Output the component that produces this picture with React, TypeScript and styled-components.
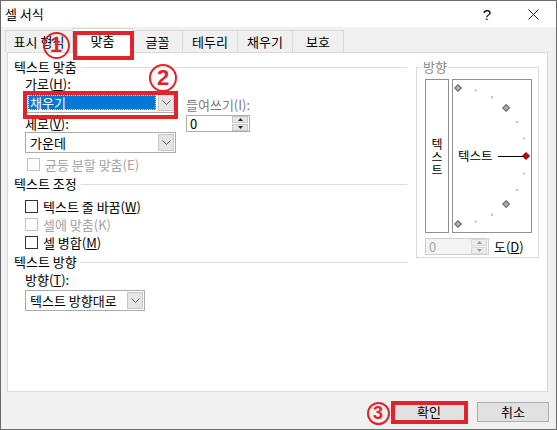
import React from "react";
import styled, { createGlobalStyle } from "styled-components";

const GlobalStyle = createGlobalStyle`
  html, body {
    margin: 0;
    padding: 0;
    background: #f0f0f0;
  }
  body {
    font-family: "Noto Sans CJK KR", "Noto Sans", sans-serif;
    font-size: 13px;
    color: #000;
  }
  * {
    box-sizing: border-box;
  }
`;

const RED = "#e3232a";

const Window = styled.div`
  position: relative;
  width: 557px;
  height: 430px;
  border: 1px solid #6b6b6b;
  background: #f0f0f0;
  display: flex;
  flex-direction: column;
  overflow: hidden;
`;

const TitleBar = styled.div`
  height: 26px;
  background: #fff;
  display: flex;
  align-items: center;
  padding-left: 4px;
`;

const Title = styled.div`
  flex: 1;
  line-height: 16px;
`;

const TitleButton = styled.div`
  width: 46px;
  height: 26px;
  display: flex;
  align-items: center;
  justify-content: center;
  font-family: "Liberation Sans", sans-serif;
  font-size: 15px;
`;

const TabBar = styled.div`
  position: relative;
  z-index: 1;
  display: flex;
  align-items: flex-end;
  height: 24px;
  margin-top: 1px;
  padding-left: 5px;
`;

const Tab = styled.div<{ $w: number; $active?: boolean }>`
  width: ${(p) => p.$w}px;
  height: ${(p) => (p.$active ? 25 : 22)}px;
  margin-bottom: ${(p) => (p.$active ? -1 : 0)}px;
  margin-left: -1px;
  background: ${(p) => (p.$active ? "#fff" : "#f0f0f0")};
  border: 1px solid #d9d9d9;
  border-bottom: none;
  display: flex;
  align-items: center;
  justify-content: center;
  line-height: 16px;
  white-space: nowrap;
`;

const Panel = styled.div`
  height: 340px;
  margin: 0 8px 0 6px;
  background: #fff;
  border: 1px solid #d9d9d9;
  padding: 6px 0 0 6px;
  display: grid;
  grid-template-columns: 393px 123px;
  column-gap: 9px;
  align-items: start;
`;

const Column = styled.div`
  display: flex;
  flex-direction: column;
`;

const GroupHeader = styled.div<{ $mt?: number }>`
  display: flex;
  align-items: center;
  gap: 4px;
  height: 16px;
  margin-top: ${(p) => p.$mt ?? 0}px;
  line-height: 16px;
  white-space: nowrap;

  &::after {
    content: "";
    flex: 1;
    height: 1px;
    background: #dcdcdc;
  }
`;

const Indent = styled.div`
  display: flex;
  flex-direction: column;
  padding-left: 11px;
`;

const AlignRow = styled.div`
  display: flex;
  gap: 10px;
`;

const IndentCol = styled.div`
  display: flex;
  flex-direction: column;
  padding-top: 21px;
`;

const Label = styled.div<{ $mt?: number; $muted?: boolean }>`
  height: 17px;
  line-height: 17px;
  margin-top: ${(p) => p.$mt ?? 0}px;
  color: ${(p) => (p.$muted ? "#7a7a7a" : "#000")};
  white-space: nowrap;
`;

const Select = styled.div<{ $w: number; $mt?: number }>`
  width: ${(p) => p.$w}px;
  height: 21px;
  margin-top: ${(p) => p.$mt ?? 0}px;
  border: 1px solid #acacac;
  background: #fff;
  display: flex;
  align-items: center;
  padding: 1px;
`;

const SelectValue = styled.div<{ $focused?: boolean }>`
  flex: 1;
  height: 15px;
  margin: 0 2px 0 1px;
  padding-left: 2px;
  line-height: 15px;
  white-space: nowrap;
  background: ${(p) => (p.$focused ? "#0078d7" : "transparent")};
  color: ${(p) => (p.$focused ? "#fff" : "#000")};
  outline: ${(p) => (p.$focused ? "1px dotted #fff" : "none")};
  outline-offset: -1px;
`;

const SelectArrow = styled.div`
  width: 16px;
  height: 17px;
  background: #e5e5e5;
  border: 1px solid #c6c6c6;
  display: flex;
  align-items: center;
  justify-content: center;
`;

const Spin = styled.div<{ $w: number; $mt?: number; $disabled?: boolean }>`
  width: ${(p) => p.$w}px;
  height: 17px;
  margin-top: ${(p) => p.$mt ?? 0}px;
  border: 1px solid ${(p) => (p.$disabled ? "#cfcfcf" : "#acacac")};
  background: ${(p) => (p.$disabled ? "#f4f4f4" : "#fff")};
  color: ${(p) => (p.$disabled ? "#a8a8a8" : "#000")};
  display: flex;
  align-items: center;
  padding-left: 3px;
  line-height: 15px;
`;

const SpinText = styled.div`
  flex: 1;
`;

const SpinButtons = styled.div`
  width: 16px;
  height: 15px;
  display: flex;
  flex-direction: column;
  gap: 1px;
  margin-right: 1px;
`;

const SpinHalf = styled.div<{ $disabled?: boolean }>`
  flex: 1;
  background: ${(p) => (p.$disabled ? "#ececec" : "#e5e5e5")};
  border: 1px solid ${(p) => (p.$disabled ? "#dadada" : "#c6c6c6")};
  display: flex;
  align-items: center;
  justify-content: center;
`;

const CheckRow = styled.div<{ $mt?: number; $disabled?: boolean; $inset?: number }>`
  display: flex;
  align-items: center;
  gap: 5px;
  height: 18px;
  margin-top: ${(p) => p.$mt ?? 0}px;
  padding-left: ${(p) => p.$inset ?? 0}px;
  color: ${(p) => (p.$disabled ? "#a3a3a3" : "#000")};
  white-space: nowrap;
`;

const CheckBox = styled.span<{ $disabled?: boolean }>`
  width: 13px;
  height: 13px;
  border: 1px solid ${(p) => (p.$disabled ? "#c4c4c4" : "#333")};
  background: #fff;
`;

const OrientGroup = styled.fieldset`
  margin: 0;
  padding: 0 0 0 8px;
  height: 199px;
  border: 1px solid #dcdcdc;
`;

const OrientLegend = styled.legend`
  margin-left: -3px;
  padding: 0 1px;
  height: 16px;
  line-height: 16px;
  color: #8a8a8a;
`;

const OrientBoxes = styled.div`
  display: flex;
  gap: 3px;
  margin-top: 4px;
`;

const VerticalBox = styled.div`
  width: 24px;
  height: 154px;
  border: 1px solid #8f8f8f;
  display: flex;
  flex-direction: column;
  align-items: center;
  justify-content: center;
  font-size: 12px;
  line-height: 13px;
`;

const DialBox = styled.div`
  width: 80px;
  height: 154px;
  border: 1px solid #8f8f8f;
`;

const DegreeRow = styled.div`
  display: flex;
  align-items: center;
  gap: 5px;
  margin-top: 4px;
  white-space: nowrap;
`;

const Footer = styled.div`
  display: flex;
  justify-content: flex-end;
  gap: 12px;
  padding: 10px 7px 0 0;
`;

const Button = styled.div`
  width: 72px;
  height: 20px;
  background: #e1e1e1;
  border: 1px solid #adadad;
  display: flex;
  align-items: center;
  justify-content: center;
  line-height: 16px;
`;

const Mark = styled.div<{ $x: number; $y: number; $d: number }>`
  position: absolute;
  z-index: 3;
  left: ${(p) => p.$x - p.$d / 2}px;
  top: ${(p) => p.$y - p.$d / 2}px;
  width: ${(p) => p.$d}px;
  height: ${(p) => p.$d}px;
  border: 2.5px solid ${RED};
  border-radius: 50%;
  display: flex;
  align-items: center;
  justify-content: center;
  color: ${RED};
  font-family: "Liberation Sans", sans-serif;
  font-weight: bold;
  font-size: ${(p) => Math.round(p.$d * 0.8)}px;
  line-height: 1;
`;

const RedBox = styled.div<{ $x: number; $y: number; $w: number; $h: number }>`
  position: absolute;
  z-index: 2;
  left: ${(p) => p.$x}px;
  top: ${(p) => p.$y}px;
  width: ${(p) => p.$w}px;
  height: ${(p) => p.$h}px;
  border: 4px solid ${RED};
`;

const Chevron = () => (
  <svg width="9" height="5" viewBox="0 0 9 5">
    <path d="M0.5 0.5 L4.5 4.5 L8.5 0.5" stroke="#5a5a5a" fill="none" />
  </svg>
);

const Tri = ({ up, color }: { up?: boolean; color: string }) => (
  <svg width="5" height="3" viewBox="0 0 5 3">
    <path d={up ? "M0 3 L2.5 0 L5 3 Z" : "M0 0 L2.5 3 L5 0 Z"} fill={color} />
  </svg>
);

const Dial = () => {
  const cx = 5;
  const cy = 76;
  const r = 68;
  const marks = [];
  for (let i = -6; i <= 6; i++) {
    const a = (i * 15 * Math.PI) / 180;
    const x = cx + r * Math.cos(a);
    const y = cy + r * Math.sin(a);
    if (i % 3 === 0) {
      const s = 3.5;
      const red = i === 0;
      marks.push(
        <polygon
          key={i}
          points={`${x},${y - s} ${x + s},${y} ${x},${y + s} ${x - s},${y}`}
          fill={red ? "#c00000" : "#a6a6a6"}
          stroke={red ? "#7a0000" : "#454545"}
          strokeWidth="1"
        />
      );
    } else {
      marks.push(<rect key={i} x={x - 1} y={y - 1} width="2" height="2" fill="#bdbdbd" />);
    }
  }
  return (
    <svg width="78" height="152" viewBox="0 0 78 152">
      <text x="5" y="80.5" fontSize="12.5" fontFamily='"Noto Sans CJK KR", sans-serif' fill="#000">
        텍스트
      </text>
      <line x1="45" y1="76.5" x2="70" y2="76.5" stroke="#000" strokeWidth="1" />
      {marks}
    </svg>
  );
};

const tabs = [
  { label: "표시 형식", w: 68 },
  { label: "맞춤", w: 61, active: true },
  { label: "글꼴", w: 51 },
  { label: "테두리", w: 56 },
  { label: "채우기", w: 56 },
  { label: "보호", w: 52 },
];

export default function App() {
  return (
    <>
      <GlobalStyle />
      <Window>
        <TitleBar>
          <Title>셀 서식</Title>
          <TitleButton>?</TitleButton>
          <TitleButton>
            <svg width="11" height="11" viewBox="0 0 11 11">
              <path d="M0.5 0.5 L10.5 10.5 M10.5 0.5 L0.5 10.5" stroke="#222" strokeWidth="1" />
            </svg>
          </TitleButton>
        </TitleBar>

        <TabBar>
          {tabs.map((t) => (
            <Tab key={t.label} $w={t.w} $active={t.active}>
              {t.label}
            </Tab>
          ))}
        </TabBar>

        <Panel>
          <Column>
            <GroupHeader>텍스트 맞춤</GroupHeader>
            <Indent>
              <AlignRow>
                <Column>
                  <Label>
                    가로(<u>H</u>):
                  </Label>
                  <Select $w={151}>
                    <SelectValue $focused>채우기</SelectValue>
                    <SelectArrow>
                      <Chevron />
                    </SelectArrow>
                  </Select>
                  <Label $mt={2}>
                    세로(<u>V</u>):
                  </Label>
                  <Select $w={151}>
                    <SelectValue>가운데</SelectValue>
                    <SelectArrow>
                      <Chevron />
                    </SelectArrow>
                  </Select>
                </Column>
                <IndentCol>
                  <Label $muted>들여쓰기(I):</Label>
                  <Spin $w={64} $mt={2}>
                    <SpinText>0</SpinText>
                    <SpinButtons>
                      <SpinHalf>
                        <Tri up color="#222" />
                      </SpinHalf>
                      <SpinHalf>
                        <Tri color="#222" />
                      </SpinHalf>
                    </SpinButtons>
                  </Spin>
                </IndentCol>
              </AlignRow>
              <CheckRow $mt={2} $disabled $inset={2}>
                <CheckBox $disabled />
                균등 분할 맞춤(E)
              </CheckRow>
            </Indent>

            <GroupHeader $mt={3}>텍스트 조정</GroupHeader>
            <Indent>
              <CheckRow $mt={5}>
                <CheckBox />
                <span>
                  텍스트 줄 바꿈(<u>W</u>)
                </span>
              </CheckRow>
              <CheckRow $disabled>
                <CheckBox $disabled />
                셀에 맞춤(K)
              </CheckRow>
              <CheckRow>
                <CheckBox />
                <span>
                  셀 병합(<u>M</u>)
                </span>
              </CheckRow>
            </Indent>

            <GroupHeader $mt={3}>텍스트 방향</GroupHeader>
            <Indent>
              <Label $mt={1}>
                방향(<u>T</u>):
              </Label>
              <Select $w={120} $mt={2}>
                <SelectValue>텍스트 방향대로</SelectValue>
                <SelectArrow>
                  <Chevron />
                </SelectArrow>
              </Select>
            </Indent>
          </Column>

          <OrientGroup>
            <OrientLegend>방향</OrientLegend>
            <OrientBoxes>
              <VerticalBox>
                <span>텍</span>
                <span>스</span>
                <span>트</span>
              </VerticalBox>
              <DialBox>
                <Dial />
              </DialBox>
            </OrientBoxes>
            <DegreeRow>
              <Spin $w={64} $disabled>
                <SpinText>0</SpinText>
                <SpinButtons>
                  <SpinHalf $disabled>
                    <Tri up color="#9a9a9a" />
                  </SpinHalf>
                  <SpinHalf $disabled>
                    <Tri color="#9a9a9a" />
                  </SpinHalf>
                </SpinButtons>
              </Spin>
              <span>
                도(<u>D</u>)
              </span>
            </DegreeRow>
          </OrientGroup>
        </Panel>

        <Footer>
          <Button>확인</Button>
          <Button>취소</Button>
        </Footer>

        <RedBox $x={72} $y={30} $w={61} $h={29} />
        <RedBox $x={22} $y={90} $w={155} $h={28} />
        <RedBox $x={390} $y={400} $w={77} $h={23} />
        <Mark $x={55} $y={44} $d={27}>1</Mark>
        <Mark $x={162} $y={77} $d={28}>2</Mark>
        <Mark $x={377} $y={412} $d={23}>3</Mark>
      </Window>
    </>
  );
}
